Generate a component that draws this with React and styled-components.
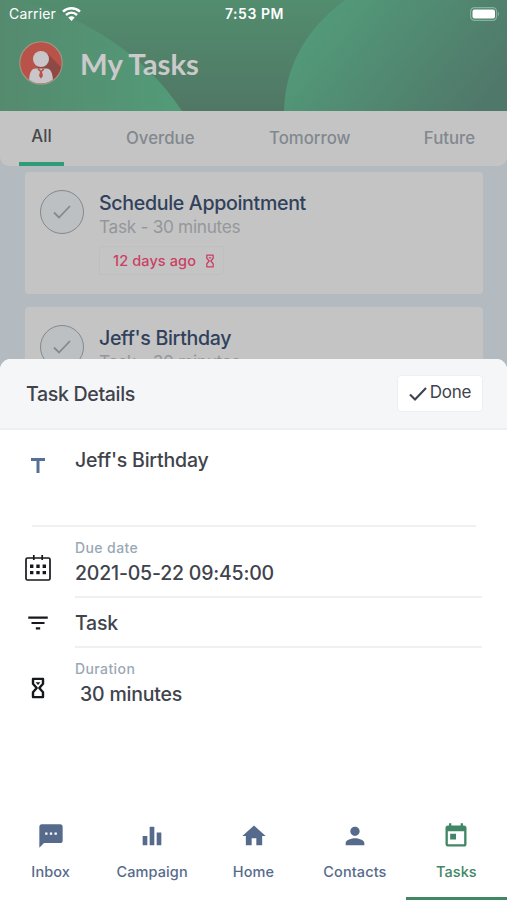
import React from "react";
import styled, { createGlobalStyle } from "styled-components";
import {
  MdSms,
  MdEqualizer,
  MdHome,
  MdPerson,
  MdToday,
  MdTitle,
  MdFilterList,
} from "react-icons/md";

const tabs = [
  { name: "All", width: 45, gap: 0 },
  { name: "Overdue", width: 68, gap: 62 },
  { name: "Tomorrow", width: 81, gap: 75 },
  { name: "Future", width: 53, gap: 73 },
];

const tasks = [
  { title: "Schedule Appointment", info: "Task - 30 minutes", due: "12 days ago" },
  { title: "Jeff's Birthday", info: "Task - 30 minutes" },
];

const navItems = [
  { name: "Inbox", Icon: MdSms },
  { name: "Campaign", Icon: MdEqualizer },
  { name: "Home", Icon: MdHome },
  { name: "Contacts", Icon: MdPerson },
  { name: "Tasks", Icon: MdToday },
];

function Hourglass({ width, height, stroke = 2 }) {
  return (
    <svg width={width} height={height} viewBox="0 0 14 22" fill="none" stroke="currentColor" strokeWidth={stroke}>
      <path d="M2 1.900h10v4.800L8.300 11l3.700 4.300v4.800H2v-4.800L5.700 11 2 6.700z" strokeLinejoin="round" />
      <path d="M4.600 5.300h4.800L7 8z" fill="currentColor" stroke="none" />
    </svg>
  );
}

function Check({ width, stroke = 2 }) {
  return (
    <svg width={width} height={(width * 14) / 18} viewBox="0 0 18 14" fill="none" stroke="currentColor" strokeWidth={stroke}>
      <path d="M1 7.500L6 12.500L17 1" />
    </svg>
  );
}

function Avatar() {
  return (
    <svg width="44" height="44" viewBox="0 0 44 44">
      <clipPath id="face">
        <circle cx="22" cy="22" r="20.500" />
      </clipPath>
      <circle cx="22" cy="22" r="21.200" fill="#b9534a" stroke="#9c9a82" strokeWidth="1.100" />
      <g clipPath="url(#face)">
        <path d="M28 12L46 30V46H22L12 36z" fill="#8f4944" />
        <path d="M10 44C10 34 11 27.500 17 27.500h10C33 27.500 34 34 34 44z" fill="#c9c6c9" />
        <path d="M19.500 27l2.500 2.500 2.500-2.500.8 1.700-2.300 2 1 4-2 3-2-3 1-4-2.300-2z" fill="#b9534a" />
        <circle cx="22" cy="18" r="8" fill="#c9c6c9" />
      </g>
    </svg>
  );
}

function App() {
  return (
    <Screen>
      <GlobalStyle />
      <Header>
        <HeaderArt viewBox="0 0 507 111">
          <defs>
            <linearGradient id="base" x1="0" y1="0" x2="0" y2="1">
              <stop offset="0" stopColor="#528d6e" />
              <stop offset="1" stopColor="#507765" />
            </linearGradient>
            <linearGradient id="left" x1="0" y1="0" x2="1" y2="0">
              <stop offset="0" stopColor="#558a6e" />
              <stop offset="1" stopColor="#529b79" />
            </linearGradient>
            <linearGradient id="right" gradientUnits="userSpaceOnUse" x1="320" y1="15" x2="460" y2="130">
              <stop offset="0" stopColor="#529a79" />
              <stop offset="1" stopColor="#50786a" />
            </linearGradient>
          </defs>
          <rect width="507" height="111" fill="url(#base)" />
          <path d="M0 0H20C85 18 143 52 182 111H0z" fill="url(#left)" />
          <path d="M345 0C306 29 285 66 284 111H507V0z" fill="url(#right)" />
        </HeaderArt>
        <StatusBar>
          <Carrier>
            Carrier
            <svg width="19" height="14" viewBox="0 0 19 14" fill="none" stroke="#fff" strokeWidth="2.500">
              <path d="M1 4.700C6 .1 13 .1 18 4.700" />
              <path d="M4 8C7.300 5 11.700 5 15 8" />
              <path d="M9.500 14L6.300 10.600Q9.500 8 12.700 10.600z" fill="#fff" stroke="none" />
            </svg>
          </Carrier>
          <Time>7:53 PM</Time>
          <Battery>
            <svg width="30" height="14" viewBox="0 0 30 14">
              <rect x=".6" y=".6" width="26" height="12.800" rx="4" fill="none" stroke="#84b39b" strokeWidth="1.200" />
              <rect x="2.500" y="2.500" width="22.500" height="9" rx="2" fill="#fff" />
              <path d="M28 4.500q2 2.500 0 5z" fill="#84b39b" />
            </svg>
          </Battery>
        </StatusBar>
        <TitleRow>
          <Avatar />
          <PageTitle>My Tasks</PageTitle>
        </TitleRow>
      </Header>

      <Tabs>
        {tabs.map((tab, index) => (
          <Tab key={tab.name} $active={index === 0} $width={tab.width} $gap={tab.gap}>
            {tab.name}
          </Tab>
        ))}
      </Tabs>

      <List>
        {tasks.map((task) => (
          <Card key={task.title}>
            <Circle>
              <Check width={18} stroke={1.8} />
            </Circle>
            <div>
              <CardTitle>{task.title}</CardTitle>
              <CardInfo>{task.info}</CardInfo>
              {task.due && (
                <Due>
                  {task.due}
                  <Hourglass width={10} height={14} />
                </Due>
              )}
            </div>
          </Card>
        ))}
      </List>

      <Sheet>
        <SheetHeader>
          <SheetTitle>Task Details</SheetTitle>
          <DoneButton>
            <Check width={18} stroke={2.1} />
            <span>Done</span>
          </DoneButton>
        </SheetHeader>
        <NameRow>
          <IconCell $top={24} $color="#566f96">
            <MdTitle size={24} />
          </IconCell>
          <Value $top={17}>Jeff's Birthday</Value>
        </NameRow>
        <Row $height={71}>
          <IconCell $top={28}>
            <svg width="26" height="26" viewBox="0 0 26 26" fill="none" stroke="currentColor" strokeWidth="1.700">
              <rect x="1" y="3" width="24" height="22" rx="1.500" />
              <path d="M8.800 0v5M17.200 0v5" />
              <path d="M5 11.300h3.400M11.300 11.300h3.400M17.600 11.300h3.400M5 17.600h3.400M11.300 17.600h3.400M17.600 17.600h3.400" strokeWidth="3.400" />
            </svg>
          </IconCell>
          <Field>
            <Label>Due date</Label>
            <Value>2021-05-22 09:45:00</Value>
          </Field>
        </Row>
        <Row $height={50}>
          <IconCell $top={12}>
            <MdFilterList size={26} />
          </IconCell>
          <Field>
            <Value $top={12}>Task</Value>
          </Field>
        </Row>
        <Row $height={72} $last>
          <IconCell $top={29}>
            <Hourglass width={14} height={22} stroke={2.4} />
          </IconCell>
          <Field>
            <Label>Duration</Label>
            <Value $indent={5}>30 minutes</Value>
          </Field>
        </Row>
        <Nav>
          {navItems.map(({ name, Icon }) => (
            <NavItem key={name} $active={name === "Tasks"}>
              <Icon size={28} />
              <span>{name}</span>
            </NavItem>
          ))}
        </Nav>
      </Sheet>
    </Screen>
  );
}

const GlobalStyle = createGlobalStyle`
  * {
    box-sizing: border-box;
  }
  body {
    margin: 0;
    font-family: Inter, "Liberation Sans", sans-serif;
  }
  svg {
    display: block;
    flex-shrink: 0;
  }
`;
const Screen = styled.div`
  position: relative;
  width: 507px;
  height: 900px;
  overflow: hidden;
  background-color: #b3bac0;
`;
const Header = styled.header`
  position: relative;
  height: 111px;
  overflow: hidden;
`;
const HeaderArt = styled.svg`
  position: absolute;
  inset: 0;
  width: 507px;
  height: 111px;
`;
const StatusBar = styled.div`
  position: relative;
  display: grid;
  grid-template-columns: 1fr auto 1fr;
  align-items: center;
  height: 27px;
  padding: 0 7px 0 9px;
  color: #fff;
  font-size: 14px;
`;
const Carrier = styled.div`
  display: flex;
  align-items: center;
  gap: 6px;
  letter-spacing: 0.15px;
`;
const Time = styled.div`
  font-weight: 600;
  letter-spacing: 0.55px;
`;
const Battery = styled.div`
  display: flex;
  justify-content: flex-end;
`;
const TitleRow = styled.div`
  position: relative;
  display: flex;
  align-items: center;
  gap: 17px;
  padding: 13px 0 0 19px;
`;
const PageTitle = styled.h1`
  margin: 0;
  padding-top: 2px;
  color: #cacaca;
  font-family: Lato, sans-serif;
  font-size: 29.3px;
  font-weight: 700;
  line-height: 44px;
`;
const Tabs = styled.div`
  display: flex;
  height: 55px;
  padding-left: 19px;
  background-color: #c4c4c4;
  border-radius: 0 0 9px 9px;
`;
const Tab = styled.div`
  width: ${(props) => props.$width}px;
  margin-left: ${(props) => props.$gap}px;
  padding-top: ${(props) => (props.$active ? 14 : 16)}px;
  color: ${(props) => (props.$active ? "#45484c" : "#82888f")};
  border-bottom: 4px solid ${(props) => (props.$active ? "#2f9c77" : "transparent")};
  font-size: 16.8px;
  font-weight: 500;
  line-height: 22px;
  text-align: center;
  white-space: nowrap;
`;
const List = styled.div`
  display: flex;
  flex-direction: column;
  gap: 13px;
  padding: 6px 24px 0 25px;
`;
const Card = styled.div`
  display: flex;
  gap: 15px;
  height: 122px;
  padding: 18px 15px;
  background-color: #c4c4c4;
  border-radius: 4px;
`;
const Circle = styled.div`
  display: flex;
  align-items: center;
  justify-content: center;
  width: 44px;
  height: 44px;
  color: #83898c;
  background-color: #bdc0c2;
  border: 1px solid #83898c;
  border-radius: 50%;
`;
const CardTitle = styled.div`
  color: #30415b;
  font-size: 19.6px;
  font-weight: 500;
  letter-spacing: -0.33px;
  line-height: 26px;
`;
const CardInfo = styled.div`
  color: #94979a;
  font-size: 17.3px;
  letter-spacing: -0.32px;
  line-height: 22px;
`;
const Due = styled.div`
  display: flex;
  align-items: center;
  gap: 9px;
  width: fit-content;
  height: 29px;
  margin-top: 8px;
  padding: 0 8px 0 13px;
  color: #cb3f64;
  border: 1px solid #bebfc1;
  border-radius: 3px;
  font-size: 14.5px;
  font-weight: 500;
  letter-spacing: 0.12px;
`;
const Sheet = styled.section`
  position: absolute;
  left: 0;
  right: 0;
  bottom: 0;
  display: flex;
  flex-direction: column;
  height: 541px;
  overflow: hidden;
  background-color: #fff;
  border-radius: 11px 11px 0 0;
`;
const SheetHeader = styled.div`
  display: flex;
  align-items: center;
  justify-content: space-between;
  height: 71px;
  padding: 0 24px 0 26px;
  background-color: #f5f6f8;
  border-bottom: 2px solid #eeeff1;
`;
const SheetTitle = styled.h2`
  margin: 0;
  color: #3f434c;
  font-size: 19.6px;
  font-weight: 500;
  letter-spacing: -0.35px;
`;
const DoneButton = styled.button`
  display: flex;
  align-items: center;
  justify-content: center;
  gap: 3px;
  width: 86px;
  height: 37px;
  padding: 0;
  color: #3f434c;
  background-color: #fff;
  border: 1px solid #eeeff1;
  border-radius: 4px;
  font-family: inherit;
  font-size: 17px;
  letter-spacing: -0.25px;
  white-space: nowrap;
  span {
    padding-bottom: 3px;
  }
`;
const NameRow = styled.div`
  display: flex;
  height: 97px;
  position: relative;
  &:after {
    content: "";
    position: absolute;
    left: 32px;
    right: 31px;
    bottom: 0;
    height: 2px;
    background-color: #eff0f1;
  }
`;
const Row = styled.div`
  display: flex;
  height: ${(props) => props.$height}px;
  & > div:last-child {
    border-bottom: ${(props) => (props.$last ? "none" : "2px solid #f0f0f1")};
  }
`;
const IconCell = styled.div`
  display: flex;
  justify-content: center;
  width: 75px;
  flex-shrink: 0;
  padding-top: ${(props) => props.$top}px;
  color: ${(props) => props.$color || "#17181b"};
`;
const Field = styled.div`
  width: 407px;
`;
const Label = styled.div`
  padding-top: 11px;
  color: #9aa8b5;
  font-size: 14px;
  font-weight: 500;
  letter-spacing: 0.4px;
  line-height: 20px;
`;
const Value = styled.div`
  padding-top: ${(props) => props.$top || 2}px;
  padding-left: ${(props) => props.$indent || 0}px;
  color: #3f434c;
  font-size: 19.5px;
  font-weight: 500;
  letter-spacing: -0.2px;
  line-height: 26px;
`;
const Nav = styled.nav`
  display: flex;
  height: 85px;
  margin-top: auto;
`;
const NavItem = styled.div`
  flex: 1;
  display: flex;
  flex-direction: column;
  align-items: center;
  gap: 11px;
  padding-top: 7px;
  color: ${(props) => (props.$active ? "#418665" : "#566b8c")};
  border-bottom: 3px solid ${(props) => (props.$active ? "#418665" : "transparent")};
  font-size: 14.5px;
  font-weight: 500;
  letter-spacing: 0.1px;
  line-height: 21px;
`;

export default App;
